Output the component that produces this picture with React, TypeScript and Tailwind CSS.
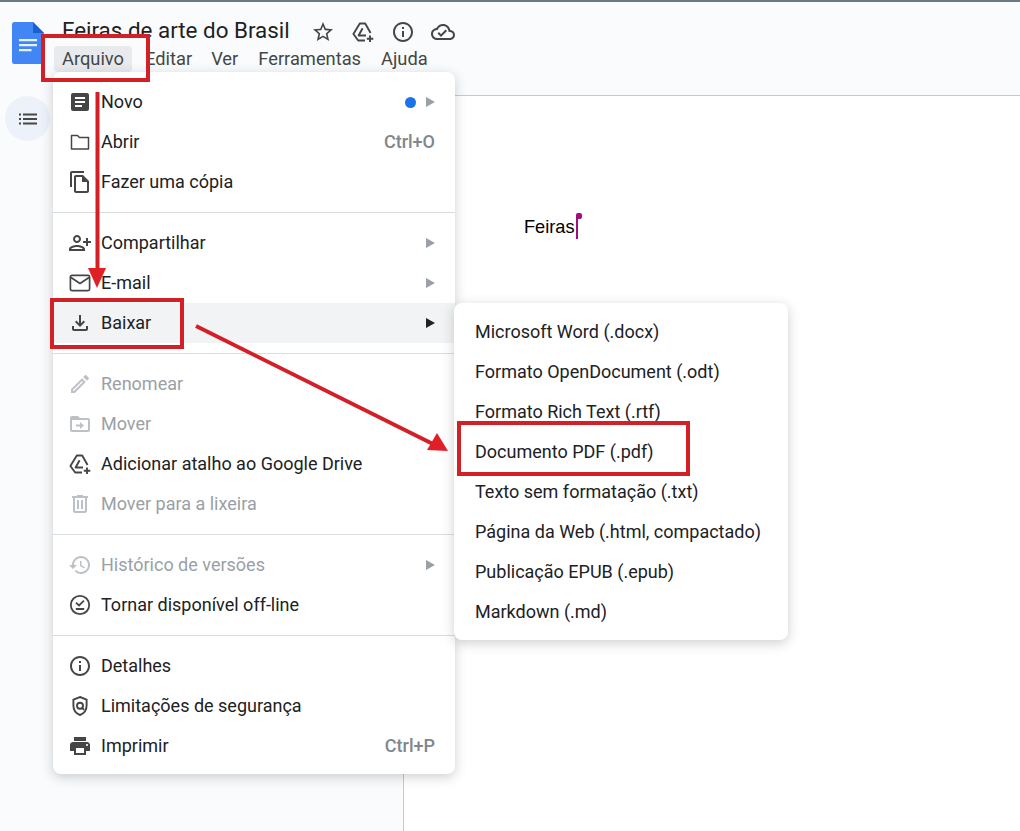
import type { ReactNode } from 'react';

const ROBOTO = 'font-[Roboto,"Liberation_Sans",sans-serif]';

// Material icon paths
const paths = {
  article: 'M19 3H5c-1.1 0-2 .9-2 2v14c0 1.1.9 2 2 2h14c1.1 0 2-.9 2-2V5c0-1.1-.9-2-2-2zm-5 14H7v-2h7v2zm3-4H7v-2h10v2zm0-4H7V7h10v2z',
  copy: 'M16 1H4c-1.1 0-2 .9-2 2v14h2V3h12V1zm-1 4H8c-1.1 0-1.99.9-1.99 2L6 21c0 1.1.89 2 1.99 2H19c1.1 0 2-.9 2-2V11l-6-6zM8 21V7h6v5h5v9H8z',
  download: 'M18 15v3H6v-3H4v3c0 1.1.9 2 2 2h12c1.1 0 2-.9 2-2v-3h-2zm-1-4l-1.41-1.41L13 12.17V4h-2v8.17L8.41 9.59 7 11l5 5 5-5z',
  edit: 'M14.06 9.02l.92.92L5.92 19H5v-.92l9.06-9.06M17.66 3c-.25 0-.51.1-.7.29l-1.83 1.83 3.75 3.75 1.83-1.83c.39-.39.39-1.02 0-1.41l-2.34-2.34c-.2-.2-.45-.29-.71-.29zm-3.6 3.19L3 17.25V21h3.75L17.81 9.94l-3.75-3.75z',
  move: 'M20 6h-8l-2-2H4c-1.1 0-2 .9-2 2v12c0 1.1.9 2 2 2h16c1.1 0 2-.9 2-2V8c0-1.1-.9-2-2-2zm0 12H4V8h16v10zM12 17l4-3.5-4-3.5v2.5H8v2h4V17z',
  trash: 'M15 4V3H9v1H4v2h1v13c0 1.1.9 2 2 2h10c1.1 0 2-.9 2-2V6h1V4h-5zm2 15H7V6h10v13zM9 8h2v9H9zm4 0h2v9h-2z',
  history: 'M13 3c-4.97 0-9 4.03-9 9H1l3.89 3.89.07.14L9 12H6c0-3.87 3.13-7 7-7s7 3.13 7 7-3.13 7-7 7c-1.93 0-3.68-.79-4.94-2.06l-1.42 1.42C8.27 19.99 10.51 21 13 21c4.97 0 9-4.03 9-9s-4.03-9-9-9zm-1 5v5l4.28 2.54.72-1.21-3.5-2.08V8H12z',
  info: 'M11 7h2v2h-2zm0 4h2v6h-2zm1-9C6.48 2 2 6.48 2 12s4.48 10 10 10 10-4.48 10-10S17.52 2 12 2zm0 18c-4.41 0-8-3.59-8-8s3.59-8 8-8 8 3.59 8 8-3.59 8-8 8z',
  print: 'M19 8H5c-1.66 0-3 1.34-3 3v6h4v4h12v-4h4v-6c0-1.66-1.34-3-3-3zm-3 11H8v-5h8v5zm3-7c-.55 0-1-.45-1-1s.45-1 1-1 1 .45 1 1-.45 1-1 1zm-1-9H6v4h12V3z',
  star: 'M22 9.24l-7.19-.62L12 2 9.19 8.63 2 9.24l5.46 4.73L5.82 21 12 17.27 18.18 21l-1.63-7.03L22 9.24zM12 15.4l-3.76 2.27 1-4.28-3.32-2.88 4.38-.38L12 6.1l1.71 4.04 4.38.38-3.32 2.88 1 4.28L12 15.4z',
  cloud: 'M19.35 10.04C18.67 6.59 15.64 4 12 4 9.11 4 6.6 5.64 5.35 8.04 2.34 8.36 0 10.91 0 14c0 3.31 2.69 6 6 6h13c2.76 0 5-2.24 5-5 0-2.64-2.05-4.78-4.65-4.96zM19 18H6c-2.21 0-4-1.79-4-4 0-2.05 1.53-3.76 3.56-3.97l1.07-.11.5-.95C8.08 7.14 9.94 6 12 6c2.62 0 4.88 1.86 5.39 4.43l.3 1.5 1.53.11c1.56.1 2.78 1.41 2.78 2.96 0 1.65-1.35 3-3 3zm-9-3.82l-2.09-2.09L6.5 13.5 10 17l6.01-6.01-1.41-1.41z',
};

const Filled = ({ d, className = 'w-6 h-6' }: { d: string; className?: string }) => (
  <svg viewBox="0 0 24 24" fill="currentColor" className={className}>
    <path d={d} />
  </svg>
);

const Folder = () => (
  <svg viewBox="0 0 24 24" fill="none" stroke="currentColor" strokeWidth="1.5" strokeLinejoin="round" className="w-6 h-6">
    <path d="M3.5 5.5h6l2 2h9v11.5h-17z" />
  </svg>
);

const Mail = () => (
  <svg viewBox="0 0 24 24" fill="none" stroke="currentColor" strokeWidth="1.7" strokeLinejoin="round" className="w-6 h-6">
    <rect x="2.4" y="4.4" width="19.2" height="15.2" rx="1.6" />
    <path d="M3 6.5l9 6 9-6" />
  </svg>
);

const PersonAdd = () => (
  <svg viewBox="0 0 24 24" fill="currentColor" className="w-6 h-6">
    <g transform="translate(24 0) scale(-1 1)">
      <path d="M15 12c2.21 0 4-1.79 4-4s-1.79-4-4-4-4 1.79-4 4 1.79 4 4 4zm0-6c1.1 0 2 .9 2 2s-.9 2-2 2-2-.9-2-2 .9-2 2-2zm0 8c-2.67 0-8 1.34-8 4v2h16v-2c0-2.66-5.33-4-8-4zm-6 4c.22-.72 3.31-2 6-2 2.7 0 5.8 1.29 6 2H9zm-3-3v-3h3v-2H6V7H4v3H1v2h3v3h2z" />
    </g>
  </svg>
);

const DriveAdd = () => (
  <svg viewBox="0 0 24 24" fill="none" stroke="currentColor" strokeWidth="1.9" strokeLinejoin="round" className="w-6 h-6">
    <path d="M14 20.5H7.2L2.4 14 8.8 3.5h5.4l5.4 9.5" />
    <path d="M11.6 8.2 7.6 15.5h7.4" />
    <path d="M19 15.5v6.5M15.8 18.8h6.5" />
  </svg>
);

const OfflineCheck = () => (
  <svg viewBox="0 0 24 24" fill="none" stroke="currentColor" strokeWidth="1.8" className="w-6 h-6">
    <circle cx="12" cy="12" r="9.2" />
    <path d="M8 9.6l3 2.8 5-4.8M7.8 16h8.4" />
  </svg>
);

const Shield = () => (
  <svg viewBox="0 0 24 24" fill="none" stroke="currentColor" strokeWidth="1.9" className="w-6 h-6">
    <path d="M12 3l6.6 2.6v5.8c0 4.4-2.6 8-6.6 9.6-4-1.6-6.6-5.2-6.6-9.6V5.6z" />
    <circle cx="12" cy="11.8" r="3" />
    <path d="M13.8 13.8l2.2 2" />
  </svg>
);

const Item = ({
  icon,
  label,
  right,
  muted,
  active,
}: {
  icon: ReactNode;
  label: string;
  right?: ReactNode;
  muted?: boolean;
  active?: boolean;
}) => (
  <div className={`h-10 flex items-center pl-[15px] pr-5 ${active ? 'bg-[#f1f3f4]' : ''}`}>
    <span className={`w-6 h-6 mr-[9px] shrink-0 ${muted ? 'text-[#bdc1c6]' : 'text-[#444746]'}`}>{icon}</span>
    <span className={`flex-1 text-[18px] pb-[2px] ${muted ? 'text-[#9aa0a6]' : 'text-[#202124]'}`}>{label}</span>
    {right}
  </div>
);

const Arrow = ({ dark }: { dark?: boolean }) => (
  <span
    className={`w-0 h-0 border-y-[5px] border-y-transparent border-l-[9px] ${
      dark ? 'border-l-[#202124]' : 'border-l-[#9aa0a6]'
    }`}
  />
);

const Shortcut = ({ text }: { text: string }) => (
  <span className="text-[18px] font-medium text-[#80868b] pb-[2px]">{text}</span>
);

const Sep = () => <div className="h-px bg-[#dadce0] my-[10px]" />;

const FileMenu = () => (
  <div className="absolute left-[53px] top-[72px] w-[402px] h-[702px] bg-white rounded-lg shadow-[0_3px_12px_rgba(60,64,67,0.25)] pt-[10px]">
    <Item
      icon={<Filled d={paths.article} />}
      label="Novo"
      right={
        <span className="flex items-center gap-[10px]">
          <span className="w-[11px] h-[11px] rounded-full bg-[#1a73e8]" />
          <Arrow />
        </span>
      }
    />
    <Item icon={<Folder />} label="Abrir" right={<Shortcut text="Ctrl+O" />} />
    <Item icon={<Filled d={paths.copy} />} label="Fazer uma cópia" />
    <Sep />
    <Item icon={<PersonAdd />} label="Compartilhar" right={<Arrow />} />
    <Item icon={<Mail />} label="E-mail" right={<Arrow />} />
    <Item icon={<Filled d={paths.download} />} label="Baixar" right={<Arrow dark />} active />
    <Sep />
    <Item icon={<Filled d={paths.edit} />} label="Renomear" muted />
    <Item icon={<Filled d={paths.move} />} label="Mover" muted />
    <Item icon={<DriveAdd />} label="Adicionar atalho ao Google Drive" />
    <Item icon={<Filled d={paths.trash} />} label="Mover para a lixeira" muted />
    <Sep />
    <Item icon={<Filled d={paths.history} />} label="Histórico de versões" right={<Arrow />} muted />
    <Item icon={<OfflineCheck />} label="Tornar disponível off-line" />
    <Sep />
    <Item icon={<Filled d={paths.info} />} label="Detalhes" />
    <Item icon={<Shield />} label="Limitações de segurança" />
    <Item icon={<Filled d={paths.print} />} label="Imprimir" right={<Shortcut text="Ctrl+P" />} />
  </div>
);

const formats = [
  'Microsoft Word (.docx)',
  'Formato OpenDocument (.odt)',
  'Formato Rich Text (.rtf)',
  'Documento PDF (.pdf)',
  'Texto sem formatação (.txt)',
  'Página da Web (.html, compactado)',
  'Publicação EPUB (.epub)',
  'Markdown (.md)',
];

const DownloadMenu = () => (
  <div className="absolute left-[454px] top-[303px] w-[334px] h-[337px] bg-white rounded-lg shadow-[0_3px_12px_rgba(60,64,67,0.25)] pt-[9px]">
    {formats.map((f) => (
      <div key={f} className="h-10 flex items-center pl-[21px] pb-[2px] text-[18px] text-[#202124]">
        {f}
      </div>
    ))}
  </div>
);

// The red marks drawn over the screenshot
const Annotations = () => (
  <svg className="absolute inset-0 pointer-events-none" width="1020" height="831" viewBox="0 0 1020 831">
    <g fill="none" stroke="#d32027" strokeWidth="4">
      <rect x="43" y="36" width="105" height="44" />
      <rect x="52" y="300" width="130" height="47" />
      <rect x="459" y="423" width="229" height="51" />
      <path d="M97.5 92V270" />
      <path d="M196 326 433 444" />
    </g>
    <path d="M88 268h18l-9 20z" fill="#e01f26" />
    <path d="M437 433l11 18-21-1z" fill="#e01f26" />
  </svg>
);

export default function App() {
  return (
    <div className={`relative w-[1020px] h-[831px] overflow-hidden bg-[#f9fbfd] ${ROBOTO}`}>
      <div className="h-[2px] bg-[#6e7881]" />

      {/* Title bar */}
      <div className="h-[93px] flex items-start pl-3 pt-5">
        <svg viewBox="0 0 32 42" className="w-8 h-[42px] mr-[18px] shrink-0">
          <path d="M2.5 0H21l11 11v28.5a2.5 2.5 0 0 1-2.5 2.5h-27A2.5 2.5 0 0 1 0 39.5v-37A2.5 2.5 0 0 1 2.5 0z" fill="#4285f4" />
          <path d="M21 0l11 11H21z" fill="#1a5fd0" />
          <path d="M7 17h18v2.2H7zM7 22h18v2.2H7zM7 27h12.5v2.2H7z" fill="#e8f0fe" />
        </svg>
        <div>
          <div className="flex items-center h-[20px]">
            <span className="text-[22.4px] text-[#1f1f1f] whitespace-nowrap w-[249px] pb-[2px]">Feiras de arte do Brasil</span>
            <span className="flex items-center gap-4 text-[#444746]">
              <Filled d={paths.star} />
              <DriveAdd />
              <Filled d={paths.info} />
              <Filled d={paths.cloud} />
            </span>
          </div>
          <div className="flex items-center mt-[4px] -ml-[8px] text-[18.3px] text-[#444746] leading-[26px]">
            <span className="px-2 rounded bg-[#e8eaed] mr-[5px]">Arquivo</span>
            <span className="px-2 mr-[3px]">Editar</span>
            <span className="px-2 mr-[4px]">Ver</span>
            <span className="px-2 mr-[4px]">Ferramentas</span>
            <span className="px-2">Ajuda</span>
          </div>
        </div>
      </div>

      {/* Side panel and page */}
      <div className="flex h-[736px]">
        <div className="w-[404px] border-r border-[#c7c9cc] pl-[5px] pt-[1px]">
          <div className="w-[45px] h-[45px] rounded-full bg-[#edf2fa] flex items-center justify-center text-[#444746]">
            <svg viewBox="0 0 24 24" fill="currentColor" className="w-6 h-6">
              <path d="M7 6.5h14v2H7zM7 11h14v2H7zM7 15.5h14v2H7zM3 6.5h2v2H3zM3 11h2v2H3zM3 15.5h2v2H3z" />
            </svg>
          </div>
        </div>
        <div className="flex-1 bg-white border-t border-[#c7c9cc] pl-[120px] pt-[120px]">
          <div className="relative inline-block text-[18.2px] text-black font-['Liberation_Sans',sans-serif] leading-[22px]">
            Feiras
            <span className="absolute -right-[3px] -top-[1px] w-[2px] h-[24px] bg-[#a0107a]" />
            <span className="absolute -right-[7px] -top-[3px] w-[6px] h-[6px] rounded-[2px] bg-[#a0107a]" />
          </div>
        </div>
      </div>

      <FileMenu />
      <DownloadMenu />
      <Annotations />
    </div>
  );
}
